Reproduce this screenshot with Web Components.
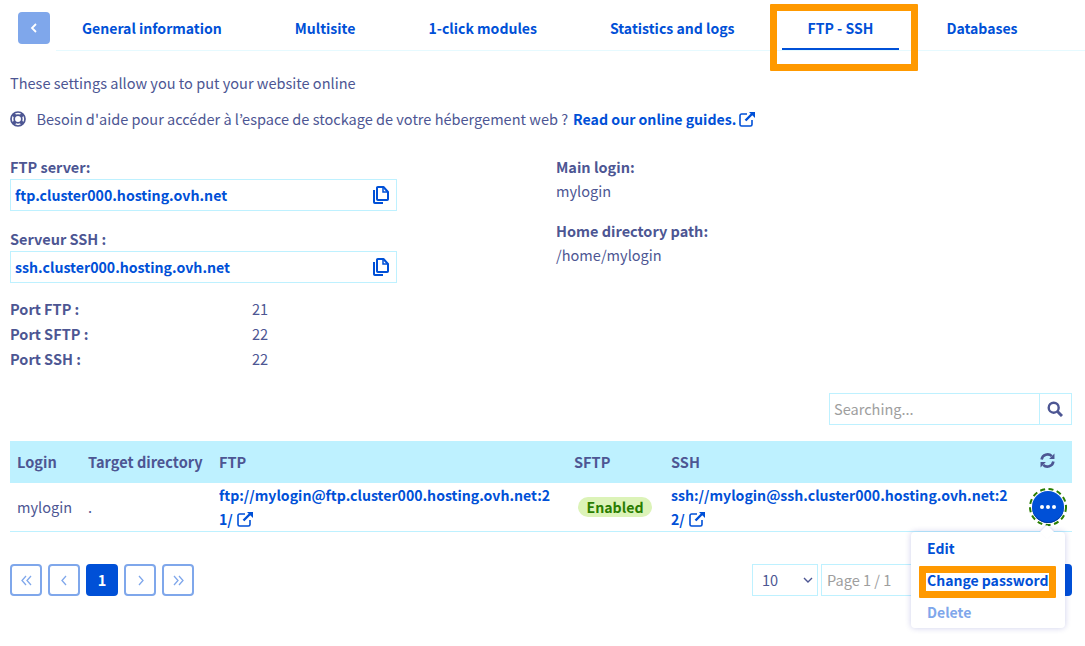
<!DOCTYPE html>
<html lang="en">
<head>
<meta charset="utf-8">
<title>FTP - SSH</title>
<style>
  html, body { margin: 0; background: #fff; }
  body {
    font-family: "Noto Sans CJK JP", "Open Sans", sans-serif;
    font-size: 14.55px;
    line-height: 24px;
    color: #4d5693;
    --bold: 14.15px;
    --label: 14.5px;
  }
</style>
</head>
<body>
<hosting-page></hosting-page>

<script>
const ICONS = {
  external: `<svg width="17" height="16" viewBox="0 0 17 16" fill="none" stroke="currentColor"><path d="M8 3H2.6A1.6 1.6 0 0 0 1 4.6v8.8A1.6 1.6 0 0 0 2.6 15h8.8a1.6 1.6 0 0 0 1.6-1.6V9" stroke-width="1.6"/><path d="M6.5 9.500 14 2" stroke-width="2.400"/><path d="M10 1h6v6z" fill="currentColor" stroke="none"/></svg>`,
  copy: `<svg width="17" height="18" viewBox="0 0 17 18" fill="none" stroke="currentColor" stroke-width="2"><path d="M2 4v12.200c0 .5.300.8.800.800H11"/><path d="M5 1.500v11.700c0 .5.300.8.800.800h9.400c.5 0 .8-.3.800-.8V6l-4.500-5H5.800c-.5 0-.8.200-.8.500z" stroke-linejoin="round"/><path d="M11 1v5h5" stroke-width="1.500"/></svg>`,
  ring: `<svg width="16" height="16" viewBox="0 0 16 16" fill="none" stroke="currentColor"><circle cx="8" cy="8" r="7" stroke-width="1.700"/><circle cx="8" cy="8" r="3.800" stroke-width="1.700"/><path d="M3 3l2.500 2.500M13 3l-2.500 2.500M3 13l2.500-2.500M13 13l-2.500-2.500" stroke-width="3.400"/></svg>`,
  search: `<svg width="16" height="16" viewBox="0 0 16 16" fill="none" stroke="currentColor"><circle cx="6.700" cy="6.700" r="5" stroke-width="2.400"/><path d="M10.500 10.500 15 15" stroke-width="3"/></svg>`,
  refresh: `<svg width="15" height="15" viewBox="0 0 14 14" fill="none" stroke="currentColor" stroke-width="2.400"><path d="M1.500 6A5.600 5.600 0 0 1 11 3"/><path d="M12.500 8A5.600 5.600 0 0 1 3 11"/><path d="M13.500 .5v5h-5zM.5 13.500v-5h5z" fill="currentColor" stroke="none"/></svg>`
};

function chevrons(kind) {
  const paths = {
    first: 'M7 3 3 7.500 7 12M12 3 8 7.500 12 12',
    prev: 'M9 3 5 7.500 9 12',
    next: 'M6 3 10 7.500 6 12',
    last: 'M3 3 7 7.500 3 12M8 3 12 7.500 8 12'
  };
  return `<svg width="15" height="15" viewBox="0 0 15 15" fill="none" stroke="currentColor" stroke-width="1.300"><path d="${paths[kind]}"/></svg>`;
}

class HostingTabs extends HTMLElement {
  constructor() {
    super();
    this.attachShadow({mode: 'open'});
    this.shadowRoot.innerHTML = `
<style>
  :host { display: flex; align-items: flex-start; padding: 12px 0 0 18px; height: 39px; position: relative; }
  .back {
    width: 32px; height: 32px; border-radius: 4px; background: #7fa7eb; color: #fff;
    display: flex; align-items: center; justify-content: center; flex: none; margin-right: 6px;
  }
  ul {
    list-style: none; margin: 0; padding: 0; display: flex; gap: 21px; flex: 1;
    height: 38px; border-bottom: 1px solid #e6faff;
  }
  li {
    padding: 4px 26px 0; height: 32px; font-weight: 700; color: #0050d7; white-space: nowrap;
    font-size: 14.05px;
  }
  li.active { border-bottom: 2px solid #0050d7; }
  .mark {
    position: absolute; left: 770px; top: 4px; width: 148px; height: 67px;
    border: 7px solid #f90; box-sizing: border-box; border-radius: 1px;
  }
</style>
<div class="back"><svg width="10" height="12" viewBox="0 0 10 12" fill="none" stroke="currentColor" stroke-width="1.800"><path d="M7 2 3 6l4 4"/></svg></div>
<ul>
  <li>General information</li>
  <li>Multisite</li>
  <li>1-click modules</li>
  <li>Statistics and logs</li>
  <li class="active">FTP - SSH</li>
  <li>Databases</li>
</ul>
<div class="mark"></div>`;
  }
}
customElements.define('hosting-tabs', HostingTabs);

class CopyField extends HTMLElement {
  constructor() {
    super();
    this.attachShadow({mode: 'open'});
    this.shadowRoot.innerHTML = `
<style>
  :host {
    display: flex; align-items: center; justify-content: space-between; box-sizing: border-box;
    width: 387px; height: 32px; border: 1px solid #bef1ff; padding: 0 7px 0 4px;
    font-weight: 700; font-size: var(--bold); color: #0050d7;
  }
  span { display: flex; }
</style>
<slot></slot><span>${ICONS.copy}</span>`;
  }
}
customElements.define('copy-field', CopyField);

class InfoItem extends HTMLElement {
  constructor() {
    super();
    this.attachShadow({mode: 'open'});
    this.shadowRoot.innerHTML = `
<style>
  :host { display: block; margin-bottom: 16px; }
  .label { font-weight: 700; font-size: var(--label); height: 24px; }
</style>
<div class="label"><slot name="label"></slot></div>
<slot></slot>`;
  }
}
customElements.define('info-item', InfoItem);

class ActionMenu extends HTMLElement {
  constructor() {
    super();
    this.attachShadow({mode: 'open'});
    this.shadowRoot.innerHTML = `
<style>
  :host { display: block; position: relative; width: 32px; height: 32px; }
  .btn {
    width: 32px; height: 32px; border-radius: 50%; background: #0050d7; color: #fff;
    display: flex; align-items: center; justify-content: center; gap: 2px;
    box-shadow: inset 0 -1px 0 #003a9e;
  }
  .btn i { width: 4px; height: 4px; border-radius: 50%; background: #fff; }
  .ring { position: absolute; left: -3px; top: -3px; }
  .menu {
    position: absolute; z-index: 5; top: 41px; right: -1px; width: 154px; height: 96px; box-sizing: border-box;
    background: #fff; border-radius: 4px; box-shadow: 0 0 6px rgba(0, 14, 156, .2);
    padding: 0 0 0 16px; font-weight: 700; font-size: 14px; color: #0050d7; display: flex; flex-direction: column;
  }
  .menu::before {
    content: ""; position: absolute; top: -5px; right: 13px; width: 10px; height: 10px; background: #fff;
    transform: rotate(45deg); box-shadow: -1px -1px 2px rgba(0, 14, 156, .1);
  }
  .menu div { position: relative; height: 32px; line-height: 32px; white-space: nowrap; }
  .menu .off { color: #7fa7eb; }
  .mark {
    position: absolute; left: -8px; top: 2px; width: 137px; height: 32px; box-sizing: border-box;
    border: 7px solid #f90; border-radius: 1px;
  }
</style>
<div class="btn"><i></i><i></i><i></i></div>
<svg class="ring" width="38" height="38" viewBox="0 0 38 38" fill="none" stroke="#2a7d00" stroke-width="2"><circle cx="19" cy="19" r="18" stroke-dasharray="5 3.480"/></svg>
<div class="menu">
  <div>Edit</div>
  <div>Change password<span class="mark"></span></div>
  <div class="off">Delete</div>
</div>`;
  }
}
customElements.define('action-menu', ActionMenu);

class AccountsTable extends HTMLElement {
  constructor() {
    super();
    this.attachShadow({mode: 'open'});
    this.shadowRoot.innerHTML = `
<style>
  :host { display: block; }
  table { border-collapse: collapse; width: 1062px; table-layout: fixed; }
  th {
    background: #bef1ff; height: 42px; padding: 0 7px; text-align: left; font-weight: 700; font-size: 14.55px;
    box-sizing: border-box; white-space: nowrap;
  }
  td {
    height: 48px; padding: 0 7px; box-sizing: border-box; border-bottom: 1px solid #bef1ff; line-height: 24px; vertical-align: middle;
  }
  a { color: #0050d7; font-weight: 700; font-size: 14.1px; white-space: nowrap; text-decoration: none; }
  a svg { vertical-align: -2px; margin-left: 1px; }
  .badge {
    display: inline-block; background: #dcf3b8; color: #2a7d00; font-weight: 700; font-size: var(--bold); padding: 0 8.500px;
    border-radius: 10px; height: 20px; line-height: 20px; margin-left: 4px;
  }
  .refresh { display: block; margin-left: 15px; }
  th.ic { padding: 0; }
  td.ic { padding: 0 0 0 7px; }
</style>
<table>
  <colgroup>
    <col style="width:71px"><col style="width:131px"><col style="width:355px"><col style="width:97px">
    <col style="width:361px"><col style="width:47px">
  </colgroup>
  <thead>
    <tr><th>Login</th><th>Target directory</th><th>FTP</th><th>SFTP</th><th>SSH</th><th class="ic"><span class="refresh">${ICONS.refresh}</span></th></tr>
  </thead>
  <tbody>
    <tr>
      <td>mylogin</td>
      <td>.</td>
      <td><a>ftp://mylogin@ftp.cluster000.hosting.ovh.net:2<br>1/ ${ICONS.external}</a></td>
      <td><span class="badge">Enabled</span></td>
      <td><a>ssh://mylogin@ssh.cluster000.hosting.ovh.net:2<br>2/ ${ICONS.external}</a></td>
      <td class="ic"><action-menu></action-menu></td>
    </tr>
  </tbody>
</table>`;
  }
}
customElements.define('accounts-table', AccountsTable);

class SearchBox extends HTMLElement {
  constructor() {
    super();
    this.attachShadow({mode: 'open'});
    this.shadowRoot.innerHTML = `
<style>
  :host { display: flex; width: 243px; height: 32px; box-sizing: border-box; border: 1px solid #bef1ff; }
  .field { flex: 1; padding-left: 4px; color: #9e9e9e; line-height: 30px; border-right: 1px solid #bef1ff; }
  .btn { width: 31px; box-sizing: border-box; padding-right: 2px; display: flex; align-items: center; justify-content: center; }
</style>
<div class="field">Searching...</div>
<div class="btn">${ICONS.search}</div>`;
  }
}
customElements.define('search-box', SearchBox);

class PagerBar extends HTMLElement {
  constructor() {
    super();
    this.attachShadow({mode: 'open'});
    const btn = k => `<div class="p">${chevrons(k)}</div>`;
    this.shadowRoot.innerHTML = `
<style>
  :host { display: flex; justify-content: space-between; align-items: center; height: 32px; }
  .left { display: flex; gap: 6px; }
  .p {
    width: 32px; height: 32px; box-sizing: border-box; border: 2px solid #7fa7eb; border-radius: 4px; color: #7fa7eb;
    display: flex; align-items: center; justify-content: center;
  }
  .p.on { background: #0050d7; border-color: #0050d7; color: #fff; font-weight: 700; }
  .right { display: flex; gap: 3px; }
  .sel, .page { height: 32px; box-sizing: border-box; border: 1px solid #bef1ff; line-height: 30px; }
  .sel { width: 66px; padding-left: 9px; display: flex; justify-content: space-between; align-items: center; padding-right: 4px; }
  .page { width: 215px; padding-left: 5px; color: #9e9e9e; }
  .go { width: 36px; height: 32px; background: #0050d7; border-radius: 0 4px 4px 0; margin-left: -3px; }
</style>
<div class="left">
  ${btn('first')}${btn('prev')}<div class="p on">1</div>${btn('next')}${btn('last')}
</div>
<div class="right">
  <div class="sel">10<svg width="10" height="8" viewBox="0 0 10 8" fill="none" stroke="currentColor" stroke-width="1.400"><path d="M1 2l4 4 4-4"/></svg></div>
  <div class="page">Page 1 / 1</div>
  <div class="go"></div>
</div>`;
  }
}
customElements.define('pager-bar', PagerBar);

class HostingPage extends HTMLElement {
  constructor() {
    super();
    this.attachShadow({mode: 'open'});
    this.shadowRoot.innerHTML = `
<style>
  :host { display: block; width: 1085px; height: 646px; overflow: hidden; }
  main { padding: 20px 13px 0 10px; }
  p { margin: 0; }
  .help { display: flex; align-items: center; margin-top: 12px; }
  .help svg { flex: none; }
  .help .ring { display: flex; margin-right: 11px; margin-left: -.5px; }
  .help a { color: #0050d7; font-weight: 700; font-size: var(--bold); margin-left: 5px; display: inline-flex; align-items: center; gap: 3px; }
  .columns { display: flex; margin-top: 24px; }
  .col-a { width: 546px; }
  .col-b { flex: 1; }
  .lab { font-weight: 700; font-size: var(--label); height: 24px; }
  copy-field { margin-bottom: 16px; }
  .ports { display: grid; grid-template-columns: 242px auto; grid-auto-rows: 25px; margin-top: -2px; }
  .ports b { font-weight: 700; font-size: var(--label); }
  .tools { display: flex; justify-content: flex-end; margin-top: 21px; margin-bottom: 16px; }
  pager-bar { margin-top: 32px; }
</style>
<hosting-tabs></hosting-tabs>
<main>
  <p>These settings allow you to put your website online</p>
  <div class="help">
    <span class="ring">${ICONS.ring}</span>
    <span>Besoin d'aide pour accéder à l’espace de stockage de votre hébergement web ?</span>
    <a>Read our online guides. ${ICONS.external}</a>
  </div>
  <div class="columns">
    <div class="col-a">
      <div class="lab">FTP server:</div>
      <copy-field>ftp.cluster000.hosting.ovh.net</copy-field>
      <div class="lab">Serveur SSH :</div>
      <copy-field>ssh.cluster000.hosting.ovh.net</copy-field>
      <div class="ports">
        <b>Port FTP :</b><span>21</span>
        <b>Port SFTP :</b><span>22</span>
        <b>Port SSH :</b><span>22</span>
      </div>
    </div>
    <div class="col-b">
      <info-item><span slot="label">Main login:</span>mylogin</info-item>
      <info-item><span slot="label">Home directory path:</span>/home/mylogin</info-item>
    </div>
  </div>
  <div class="tools"><search-box></search-box></div>
  <accounts-table></accounts-table>
  <pager-bar></pager-bar>
</main>`;
  }
}
customElements.define('hosting-page', HostingPage);
</script>
</body>
</html>
